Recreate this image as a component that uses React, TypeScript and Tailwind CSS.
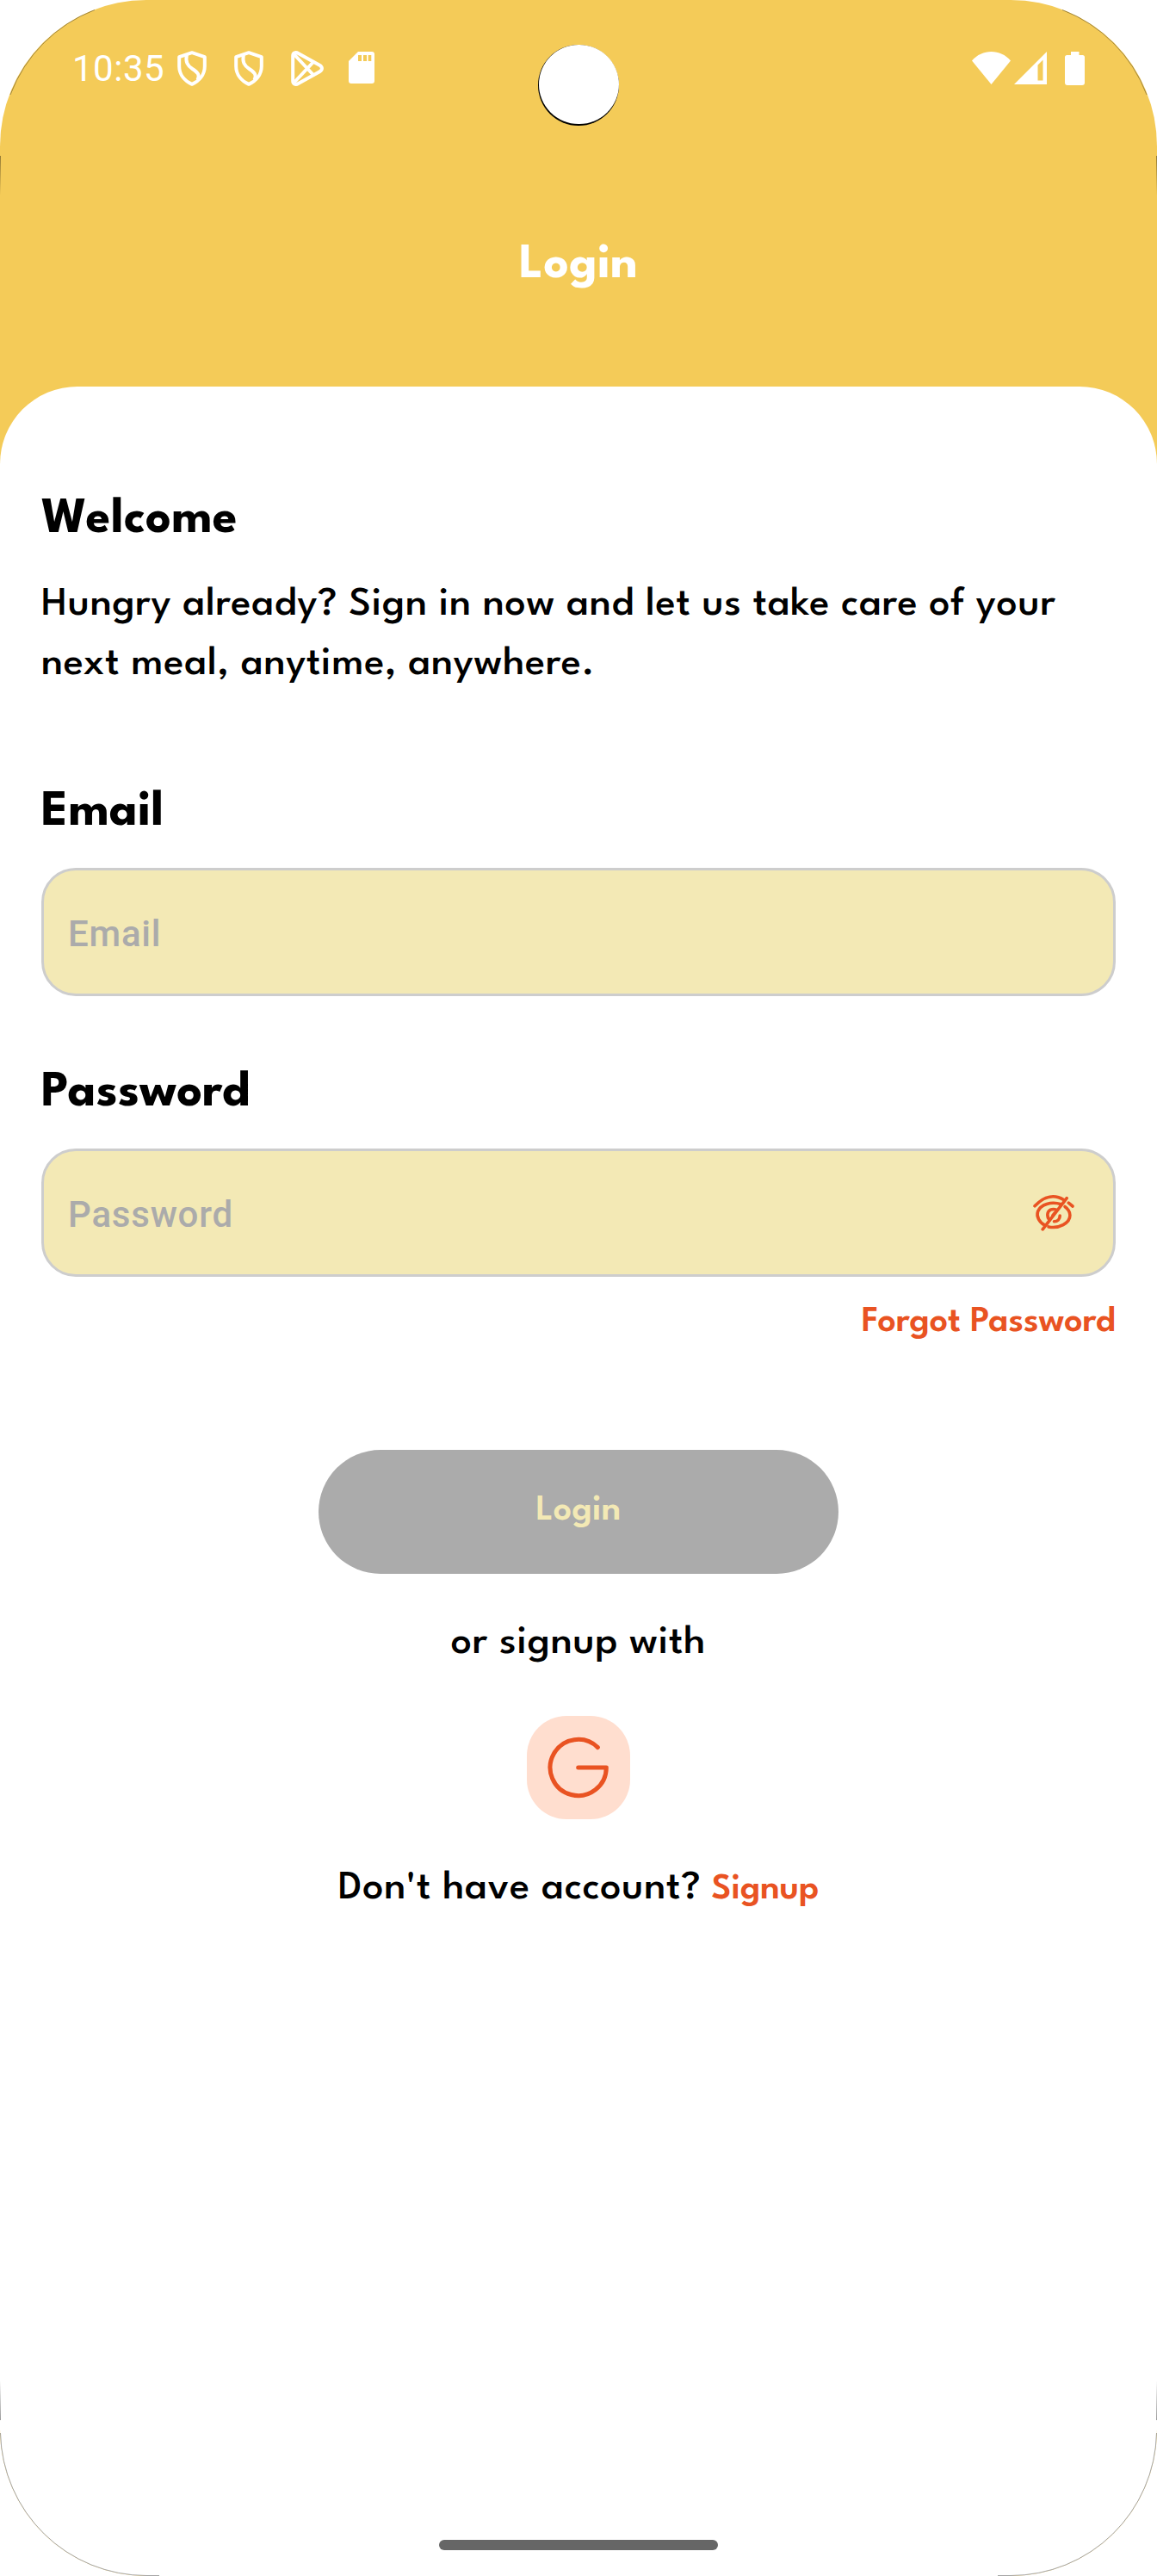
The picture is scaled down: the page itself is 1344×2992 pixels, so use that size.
import React from "react";

function Shield() {
  return (
    <svg className="h-[41px] w-[34px]" viewBox="0 0 34 41" fill="none" stroke="white" strokeWidth="4" strokeLinejoin="round">
      <path d="M17 2.2 L31.8 7.2 V18 C31.8 27.5 25.5 35 17 38.8 C8.5 35 2.2 27.5 2.2 18 V7.2 Z" />
      <path d="M10.8 5 C9.5 13 11.5 17 17.5 21 C24 25.4 26.5 28 23.5 34" />
    </svg>
  );
}

function Play() {
  return (
    <svg className="h-[41px] w-[38px]" viewBox="0 0 38 41" fill="none" stroke="white" strokeWidth="4" strokeLinejoin="round">
      <path d="M2.2 6 C2.2 2.3 5.5 1.2 8.5 3 L33.3 16.8 C36.8 18.8 36.8 22.2 33.3 24.2 L8.5 38 C5.5 39.8 2.2 38.7 2.2 35 Z" />
      <path d="M3.5 4 L26 28 M3.5 37 L26 13" />
    </svg>
  );
}

function SdCard() {
  return (
    <svg className="h-[38px] w-[30px]" viewBox="0 0 30 38">
      <path d="M11 0 H27 Q30 0 30 3 V34 Q30 37 27 37 H3 Q0 37 0 34 V11 Z" fill="white" />
      <path d="M11 4 h4 v7 h-4 z M17 4 h4 v7 h-4 z M22.7 4 h3.6 v7 h-3.6 z" fill="#f4cb58" />
    </svg>
  );
}

function Wifi() {
  return (
    <svg className="h-[38px] w-[45px]" viewBox="0 0 45 38">
      <path d="M0 10.5 C6 3.5 14 0 22.5 0 C31 0 39 3.5 45 10.5 L22.5 38 Z" fill="white" />
    </svg>
  );
}

function Signal() {
  return (
    <svg className="h-[38px] w-[38px]" viewBox="0 0 38 38">
      <path fillRule="evenodd" d="M38 0 V38 H0 Z M33.5 9.5 L27.5 15.5 V33.5 H33.5 Z" fill="white" />
    </svg>
  );
}

function Battery() {
  return (
    <svg className="h-[39px] w-[23px]" viewBox="0 0 23 39">
      <path d="M7 0 H16.5 V4 H20.5 Q23 4 23 6.5 V36 Q23 39 20 39 H3 Q0 39 0 36 V6.5 Q0 4 2.5 4 H7 Z" fill="white" />
    </svg>
  );
}

function EyeOff() {
  return (
    <svg className="h-[42px] w-[48px]" viewBox="0 0 48 42" fill="none" stroke="#e95322" strokeWidth="3.6" strokeLinecap="round">
      <path d="M2 12.8 C13.5 0.5 25.5 -0.8 36 5.8 M41.3 9.2 L46 13" />
      <path d="M32.5 10.7 C21 7 9 11 5.6 19 C3.5 25 7.5 32 13.5 34.9" />
      <path d="M18 36.9 C30 39.5 43 32.5 42.9 23.5 C42.8 19.5 40.5 16 37 13.5" />
      <path d="M19.3 29 C15.5 25 16.3 19.2 20.3 17.2 C22.5 16.2 25 16.2 27.3 17.4" />
      <path d="M31.2 24 C31.2 28 28.5 30.8 24.5 30.8" />
      <path d="M23 23.5 L25 21" />
      <path d="M39.2 3.6 L11.2 39.8" />
    </svg>
  );
}

function GoogleMark() {
  return (
    <svg className="h-[72px] w-[72px]" viewBox="0 0 72 72" fill="none" stroke="#e95322" strokeWidth="5" strokeLinecap="round" strokeLinejoin="round">
      <path d="M58.4 12.6 A32.6 32.6 0 1 0 68.3 36 H35.7" />
    </svg>
  );
}

/* Thin dark edge where the display's rounded corners meet the bezel. */
function ScreenCorners() {
  return (
    <svg className="pointer-events-none absolute inset-0 h-[2992px] w-[1344px]" viewBox="0 0 1344 2992" fill="none">
      <defs>
        <linearGradient id="fadeDown" x1="0" y1="0" x2="0" y2="1">
          <stop offset="0" stopColor="#000" stopOpacity="0.4" />
          <stop offset="1" stopColor="#000" stopOpacity="0" />
        </linearGradient>
        <linearGradient id="fadeUp" x1="0" y1="0" x2="0" y2="1">
          <stop offset="0" stopColor="#000" stopOpacity="0" />
          <stop offset="1" stopColor="#000" stopOpacity="0.4" />
        </linearGradient>
      </defs>
      <rect x="0" y="181" width="1" height="46" fill="url(#fadeDown)" />
      <rect x="1343" y="181" width="1" height="46" fill="url(#fadeDown)" />
      <rect x="0" y="2765" width="1" height="46" fill="url(#fadeUp)" />
      <rect x="1343" y="2765" width="1" height="46" fill="url(#fadeUp)" />
      <g stroke="#000" strokeWidth="0.7" strokeOpacity="0.5">
        <path d="M12 110 A169.5 169.5 0 0 1 110 11.5" />
        <path d="M1332 110 A169.5 169.5 0 0 0 1234 11.5" />
        <path d="M0.5 2826 A169.5 169.5 0 0 0 170 2991.5 H185" />
        <path d="M1343.5 2826 A169.5 169.5 0 0 1 1174 2991.5 H1159" />
      </g>
    </svg>
  );
}

const heading = "text-[58px] font-bold leading-[64px] tracking-[0.4px]";
const field =
  "mt-[32px] flex h-[149px] items-center justify-between rounded-[40px] border-[3px] border-[#cdcdcd] bg-[#f3e9b5] pl-[28px] pr-[45px]";
const placeholder = "pt-[3px] font-[Roboto,sans-serif] text-[42px] font-medium tracking-[0.8px] text-[#ababab]";
const body = "text-[48px] font-medium tracking-[0.75px]";
const link = "text-[42px] font-semibold";

export default function App() {
  return (
    <div className="relative h-[2992px] w-[1344px] bg-white font-['League_Spartan',Lato,sans-serif] text-black">
      <div className="relative flex h-full flex-col overflow-hidden rounded-[170px] bg-[#f4cb58]">
        <div className="flex h-[158px] items-center justify-between px-[84px]">
          <div className="flex items-center">
            <span className="mr-[15px] font-[Roboto,sans-serif] text-[42px] tracking-[0.5px] text-white">10:35</span>
            <div className="flex items-center gap-8">
              <Shield />
              <Shield />
              <Play />
            </div>
            <div className="ml-[29px]">
              <SdCard />
            </div>
          </div>
          <div className="flex items-center">
            <Wifi />
            <div className="ml-[4px] mr-[21px]">
              <Signal />
            </div>
            <Battery />
          </div>
        </div>
        <div className="absolute left-[625px] top-[52px] h-[94px] w-[94px] rounded-full bg-black">
          <div className="mx-auto h-[92px] w-[93px] rounded-full bg-white" />
        </div>
        <h1 className="mt-[119px] text-center text-[57px] font-bold leading-[64px] tracking-[0.4px] text-white">Login</h1>
        <main className="mt-[108px] flex flex-1 flex-col rounded-t-[90px] bg-white px-[48px] pt-[123px]">
          <h2 className={heading}>Welcome</h2>
          <p className={`${body} mt-[32px] leading-[69px]`}>
            Hungry already? Sign in now and let us take care of your
            <br />
            next meal, anytime, anywhere.
          </p>
          <h2 className={`${heading} mt-[106px]`}>Email</h2>
          <div className={field}>
            <span className={placeholder}>Email</span>
          </div>
          <h2 className={`${heading} mt-[81px]`}>Password</h2>
          <div className={field}>
            <span className={placeholder}>Password</span>
            <EyeOff />
          </div>
          <a className={`${link} mt-[29px] self-end leading-[48px] text-[#e95322]`}>Forgot Password</a>
          <button className={`${link} mt-[124px] h-[144px] w-[604px] self-center rounded-full bg-[#ababab] pb-[2px] tracking-[0.3px] text-[#f3e9b5]`}>
            Login
          </button>
          <p className={`${body} mt-[55px] text-center leading-[52px]`}>or signup with</p>
          <button className="mt-[58px] flex h-[120px] w-[120px] items-center justify-center self-center rounded-[46px] bg-[#ffdecf]">
            <GoogleMark />
          </button>
          <p className="mt-[55px] flex items-baseline justify-center gap-[12px] leading-[52px]">
            <span className={body}>Don't have account?</span>
            <a className={`${link} text-[#e95322]`}>Signup</a>
          </p>
        </main>
        <div className="absolute bottom-[30px] left-[510px] h-[12px] w-[324px] rounded-full bg-[#666]" />
      </div>
      <ScreenCorners />
    </div>
  );
}
